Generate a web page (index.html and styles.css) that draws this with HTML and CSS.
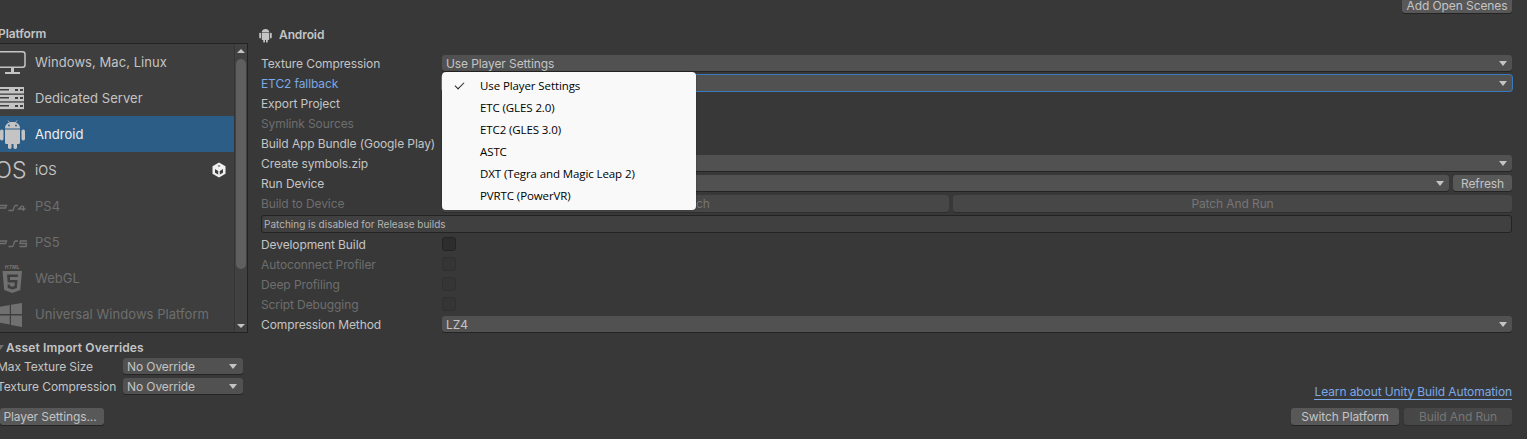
FILE: index.html
```html
<!DOCTYPE html>
<html>
<head>
  <title>Build Settings</title>
  <link rel="stylesheet" href="styles.css">
</head>
<body>
<div class="window">
  <div class="topbar">
    <button class="btn add-scenes">Add Open Scenes</button>
  </div>

  <div class="main">
    <!-- Platform list -->
    <div class="left">
      <div class="platform-title">Platform</div>
      <div class="platform-box">
        <div class="platform-list">
          <div class="platform">
            <svg class="picon" viewBox="0 0 34 36"><rect x="-6" y="7.800" width="31" height="15.500" rx="2.500" fill="none" stroke="currentColor" stroke-width="1.500"/><rect x="11" y="23" width="3" height="5" fill="currentColor"/><rect x="5" y="28" width="15" height="2" fill="currentColor"/></svg>
            <span>Windows, Mac, Linux</span>
          </div>
          <div class="platform">
            <svg class="picon" viewBox="0 0 34 36"><g fill="currentColor"><rect x="0" y="7" width="24" height="6.500"/><rect x="0" y="14.800" width="24" height="6.500"/><rect x="0" y="22.600" width="24" height="6.500"/></g><g fill="#3e3e3e"><rect x="0" y="9" width="9" height="1.500"/><rect x="15" y="9" width="3" height="2"/><rect x="20" y="9" width="3" height="2"/><rect x="0" y="17" width="9" height="1.500"/><rect x="15" y="17" width="3" height="2"/><rect x="20" y="17" width="3" height="2"/><rect x="0" y="25" width="9" height="1.500"/><rect x="15" y="25" width="3" height="2"/><rect x="20" y="25" width="3" height="2"/></g></svg>
            <span>Dedicated Server</span>
          </div>
          <div class="platform selected">
            <svg class="picon" viewBox="0 0 34 36"><g fill="#c4c4c4"><path d="M5 12.500C5 8.500 8 6 12.500 6S20 8.500 20 12.500Z"/><path d="M8 4.500 9.800 7M17 4.500 15.200 7" stroke="#c4c4c4" stroke-width=".8"/><path d="M5 13.500H20V26.500a1.500 1.500 0 0 1-1.500 1.500H6.500A1.500 1.500 0 0 1 5 26.500Z"/><rect x="0" y="13.500" width="3.500" height="11" rx="1.700"/><rect x="21.500" y="13.500" width="3.500" height="11" rx="1.700"/><rect x="8" y="26" width="3.500" height="7" rx="1.700"/><rect x="13.500" y="26" width="3.500" height="7" rx="1.700"/></g><circle cx="9" cy="9.500" r=".9" fill="#2c5d87"/><circle cx="16" cy="9.500" r=".9" fill="#2c5d87"/></svg>
            <span>Android</span>
          </div>
          <div class="platform">
            <svg class="picon" viewBox="0 0 34 36"><text class="ios-logo" x="26.500" y="26" text-anchor="end">iOS</text></svg>
            <span>iOS</span>
            <svg class="unity-mark" viewBox="0 0 14 16"><path d="M7 .5 13.500 4.200V11.800L7 15.500.5 11.800V4.200Z" fill="#f0f0f0"/><path d="M7 8.500 3 6.200V10.800L7 13 11 10.800V6.200Z" fill="#3e3e3e"/><path d="M7 8.500V13.500M7 8.500 2.500 5.900M7 8.500 11.500 5.900" stroke="#f0f0f0" stroke-width="1.600" fill="none"/><path d="M5.600 3.500H8.400L7 5Z" fill="#3e3e3e"/></svg>
          </div>
          <div class="platform off">
            <svg class="picon" viewBox="0 0 34 36"><path d="M-1 17.500H6.500L5.500 20H-1M8.500 22.500H12.500C14 22.500 13.500 17.500 15.500 17.500H18M22.500 17.500 18.500 21H25.500M23.500 18V23" fill="none" stroke="currentColor" stroke-width="1.300"/></svg>
            <span>PS4</span>
          </div>
          <div class="platform off">
            <svg class="picon" viewBox="0 0 34 36"><path d="M-1 17H6.500L5.500 19.500H-1M8.500 22.500H12.500C14 22.500 13.500 17 15.500 17H18M27 17H20.500L20 19.500H26.500L26 22.500H19.500" fill="none" stroke="currentColor" stroke-width="1.300"/></svg>
            <span>PS5</span>
          </div>
          <div class="platform off">
            <svg class="picon" viewBox="0 0 34 36"><text class="html-logo" x="12.300" y="8.500" text-anchor="middle">HTML</text><path fill-rule="evenodd" fill="currentColor" d="M2.500 11H22L20.300 30 12.300 33 4.200 30ZM7 14.500 7.700 22.500H14.800L14.500 26 12.300 26.800 10 26 9.900 24.500H7.500L7.800 28 12.300 29.500 16.800 28 17.500 20H10L9.800 17H17.700L18 14.500Z"/></svg>
            <span>WebGL</span>
          </div>
          <div class="platform off">
            <svg class="picon" viewBox="0 0 34 36"><g fill="currentColor"><path d="M-2 11 9.800 9V18H-2Z"/><path d="M11 8.800 22 7V18H11Z"/><path d="M-2 19.500H9.800V28.500L-2 26.500Z"/><path d="M11 19.500H22V31L11 29Z"/></g></svg>
            <span>Universal Windows Platform</span>
          </div>
        </div>
        <div class="scrollbar">
          <i class="scroll-up"></i>
          <div class="scroll-track"><div class="scroll-thumb"></div></div>
          <i class="scroll-down"></i>
        </div>
      </div>

      <div class="overrides-title"><i class="fold"></i>Asset Import Overrides</div>
      <div class="override-row">
        <label>Max Texture Size</label>
        <div class="drop small"><span>No Override</span></div>
      </div>
      <div class="override-row">
        <label>Texture Compression</label>
        <div class="drop small"><span>No Override</span></div>
      </div>
    </div>

    <!-- Android settings -->
    <div class="right">
      <div class="section-title">
        <svg class="section-icon" viewBox="0 0 25 36"><g fill="#c4c4c4"><path d="M5 12.500C5 8.500 8 6 12.500 6S20 8.500 20 12.500Z"/><path d="M5 13.500H20V26.500a1.500 1.500 0 0 1-1.500 1.500H6.500A1.500 1.500 0 0 1 5 26.500Z"/><rect x="0" y="13.500" width="3.500" height="11" rx="1.700"/><rect x="21.500" y="13.500" width="3.500" height="11" rx="1.700"/><rect x="8" y="26" width="3.500" height="7" rx="1.700"/><rect x="13.500" y="26" width="3.500" height="7" rx="1.700"/></g></svg>
        <span>Android</span>
      </div>

      <div class="row"><label>Texture Compression</label><div class="drop"><span>Use Player Settings</span></div></div>
      <div class="row"><label class="changed">ETC2 fallback</label><div class="drop focused"></div></div>
      <div class="row"><label>Export Project</label></div>
      <div class="row"><label class="dim">Symlink Sources</label></div>
      <div class="row"><label>Build App Bundle (Google Play)</label></div>
      <div class="row"><label>Create symbols.zip</label><div class="drop"></div></div>
      <div class="row">
        <label>Run Device</label>
        <div class="drop"></div>
        <button class="btn refresh">Refresh</button>
      </div>
      <div class="row">
        <label class="dim">Build to Device</label>
        <div class="split">
          <button class="btn disabled patch"><span>ch</span></button>
          <button class="btn disabled">Patch And Run</button>
        </div>
      </div>
      <div class="helpbox">Patching is disabled for Release builds</div>
      <div class="row"><label>Development Build</label><div class="check"></div></div>
      <div class="row"><label class="dim">Autoconnect Profiler</label><div class="check dim-check"></div></div>
      <div class="row"><label class="dim">Deep Profiling</label><div class="check dim-check"></div></div>
      <div class="row"><label class="dim">Script Debugging</label><div class="check dim-check"></div></div>
      <div class="row"><label>Compression Method</label><div class="drop"><span>LZ4</span></div></div>

      <div class="link-row"><a class="link">Learn about Unity Build Automation</a></div>
    </div>
  </div>

  <div class="footer">
    <button class="btn player-settings">Player Settings...</button>
    <div class="footer-right">
      <button class="btn wide">Switch Platform</button>
      <button class="btn wide disabled">Build And Run</button>
    </div>
  </div>

  <!-- Open popup of the Texture Compression dropdown -->
  <ul class="menu">
    <li class="checked">Use Player Settings</li>
    <li>ETC (GLES 2.0)</li>
    <li>ETC2 (GLES 3.0)</li>
    <li>ASTC</li>
    <li>DXT (Tegra and Magic Leap 2)</li>
    <li>PVRTC (PowerVR)</li>
  </ul>
</div>
</body>
</html>
```

FILE: styles.css
```css
* {
  box-sizing: border-box;
}

html, body {
  margin: 0;
  height: 100%;
  background: #383838;
  overflow: hidden;
}

body {
  font-family: Inter, "Liberation Sans", sans-serif;
  font-size: 12px;
  letter-spacing: -.1px;
  color: #c4c4c4;
}

.window {
  position: relative;
  width: 1527px;
  height: 439px;
  overflow: hidden;
}

.topbar {
  height: 14px;
  padding-right: 15px;
  display: flex;
  justify-content: flex-end;
  align-items: flex-end;
}

.btn {
  font: inherit;
  letter-spacing: inherit;
  color: #c4c4c4;
  background: #585858;
  border: 0;
  border-radius: 3px;
  box-shadow: 0 1px 0 #242424;
  height: 16px;
  padding: 0;
  white-space: nowrap;
}

.btn.disabled {
  background: #474747;
  color: #767676;
  box-shadow: 0 1px 0 #2e2e2e;
}

.add-scenes {
  width: 110px;
  flex: none;
  margin-bottom: 1px;
}

.main {
  display: grid;
  grid-template-columns: 248px 1fr;
  column-gap: 13px;
  padding-right: 15px;
}

/* left column */
.platform-title {
  height: 29px;
  padding-top: 13px;
  margin-left: -2px;
  font-weight: 600;
  line-height: 14px;
}

.platform-box {
  display: flex;
  height: 290px;
  border: 1px solid #232323;
  border-left: 0;
  background: #3e3e3e;
}

.platform-list {
  width: 234px;
  flex: none;
}

.platform {
  display: flex;
  align-items: center;
  height: 36px;
  font-size: 13px;
  letter-spacing: .05px;
  padding-right: 8px;
}

.platform.selected {
  background: #2c5d87;
  color: #f0f0f0;
}

.platform.off {
  color: #6e6e6e;
}

.picon {
  width: 34px;
  height: 36px;
  margin-right: 1px;
  flex: none;
  color: #c4c4c4;
  overflow: hidden;
}

.off .picon {
  color: #707070;
}

.ios-logo {
  font-size: 23px;
  font-weight: 300;
  fill: #c4c4c4;
}

.html-logo {
  font-size: 5px;
  font-weight: 800;
  fill: #707070;
}

.unity-mark {
  width: 14px;
  height: 16px;
  margin-left: auto;
}

.scrollbar {
  flex: 1;
  display: flex;
  flex-direction: column;
  align-items: center;
  border-left: 1px solid #353535;
  background: #414141;
}

.scroll-up, .scroll-down {
  width: 0;
  height: 0;
  margin: 5px 0 4px;
  border-left: 4px solid transparent;
  border-right: 4px solid transparent;
}

.scroll-up {
  border-bottom: 4px solid #c4c4c4;
}

.scroll-down {
  border-top: 4px solid #c4c4c4;
}

.scroll-track {
  flex: 1;
  width: 100%;
  padding: 2px 1px 0;
}

.scroll-thumb {
  width: 100%;
  height: 210px;
  background: #5f5f5f;
  border-radius: 5px;
}

.overrides-title {
  display: flex;
  align-items: center;
  height: 14px;
  margin-top: 7px;
  font-weight: 600;
  letter-spacing: .15px;
}

.fold {
  width: 0;
  height: 0;
  margin: 0 2px 0 -4px;
  border-left: 4px solid transparent;
  border-right: 4px solid transparent;
  border-top: 5px solid #707070;
}

.override-row {
  display: flex;
  align-items: center;
  height: 20px;
  margin-left: -3px;
}

.overrides-title + .override-row {
  margin-top: 2px;
}

.override-row label {
  width: 126px;
  flex: none;
  white-space: nowrap;
  padding-top: 1px;
}

/* controls */
.drop {
  flex: 1;
  min-width: 0;
  height: 16px;
  display: flex;
  align-items: center;
  padding: 0 5px 0 4px;
  background: #515151;
  border-radius: 3px;
  box-shadow: 0 1px 0 #242424;
}

.drop::after {
  content: "";
  margin-left: auto;
  border-left: 4.500px solid transparent;
  border-right: 4.500px solid transparent;
  border-top: 5px solid #c4c4c4;
}

.drop.small {
  flex: none;
  width: 120px;
  padding-right: 6px;
}

.drop.focused {
  box-shadow: 0 0 0 1px #3a79bb;
}

.right {
  min-width: 0;
}

.section-title {
  display: flex;
  align-items: center;
  height: 21px;
  margin: 10px 0 8px -2px;
  font-weight: 600;
}

.section-icon {
  width: 13px;
  height: 18px;
  margin-right: 7px;
}

.row {
  display: flex;
  align-items: center;
  height: 20px;
}

.row label {
  width: 181px;
  flex: none;
  white-space: nowrap;
}

.row label.changed {
  color: #7ba8e6;
}

.row label.dim {
  color: #6e6e6e;
}

.check {
  width: 14px;
  height: 14px;
  background: #2d2d2d;
  border: 1px solid #232323;
  border-radius: 3px;
}

.check.dim-check {
  background: #353535;
  border-color: #2f2f2f;
}

.refresh {
  width: 59px;
  margin-left: 4px;
  flex: none;
}

.split {
  flex: 1;
  display: flex;
  gap: 4px;
  margin-top: 1px;
}

.split .btn {
  height: 17px;
}

.split .btn:first-child {
  width: 507px;
}

.split .btn:last-child {
  flex: 1;
}

/* only the tail of the label shows beside the open popup */
.patch {
  text-align: left;
  padding-left: 254px;
}

.helpbox {
  display: flex;
  align-items: center;
  height: 18px;
  margin: 2px 0 1px;
  padding-left: 2px;
  font-size: 10px;
  letter-spacing: 0;
  color: #b4b4b4;
  background: #404040;
  border: 1px solid #232323;
  border-radius: 3px;
}

.link-row {
  display: flex;
  justify-content: flex-end;
  margin-top: 51px;
}

.link {
  color: #7ba8e6;
  border-bottom: 1px solid #7ba8e6;
  line-height: 14px;
}

.footer {
  position: absolute;
  left: 0;
  right: 15px;
  bottom: 14px;
  display: flex;
  justify-content: space-between;
}

.footer .btn {
  height: 17px;
}

.player-settings {
  width: 104px;
  padding-right: 4px;
}

.footer-right {
  display: flex;
  gap: 5px;
}

.wide {
  width: 108px;
}

/* popup */
.menu {
  position: absolute;
  left: 442px;
  top: 72px;
  width: 254px;
  height: 138px;
  margin: 0;
  padding: 3px 0;
  list-style: none;
  background: #f9f9f9;
  border-radius: 4px;
  font-family: "Open Sans", "Noto Sans", sans-serif;
  font-size: 11.500px;
  letter-spacing: -.1px;
  color: #000;
  box-shadow: 0 0 2px rgba(0,0,0,0.3);
}

.menu li {
  height: 22px;
  line-height: 22px;
  padding-left: 38px;
  position: relative;
}

.menu li.checked::before {
  content: "";
  position: absolute;
  left: 13px;
  top: 7px;
  width: 8px;
  height: 4px;
  border-left: 1px solid #222;
  border-bottom: 1px solid #222;
  transform: rotate(-45deg);
}
```
